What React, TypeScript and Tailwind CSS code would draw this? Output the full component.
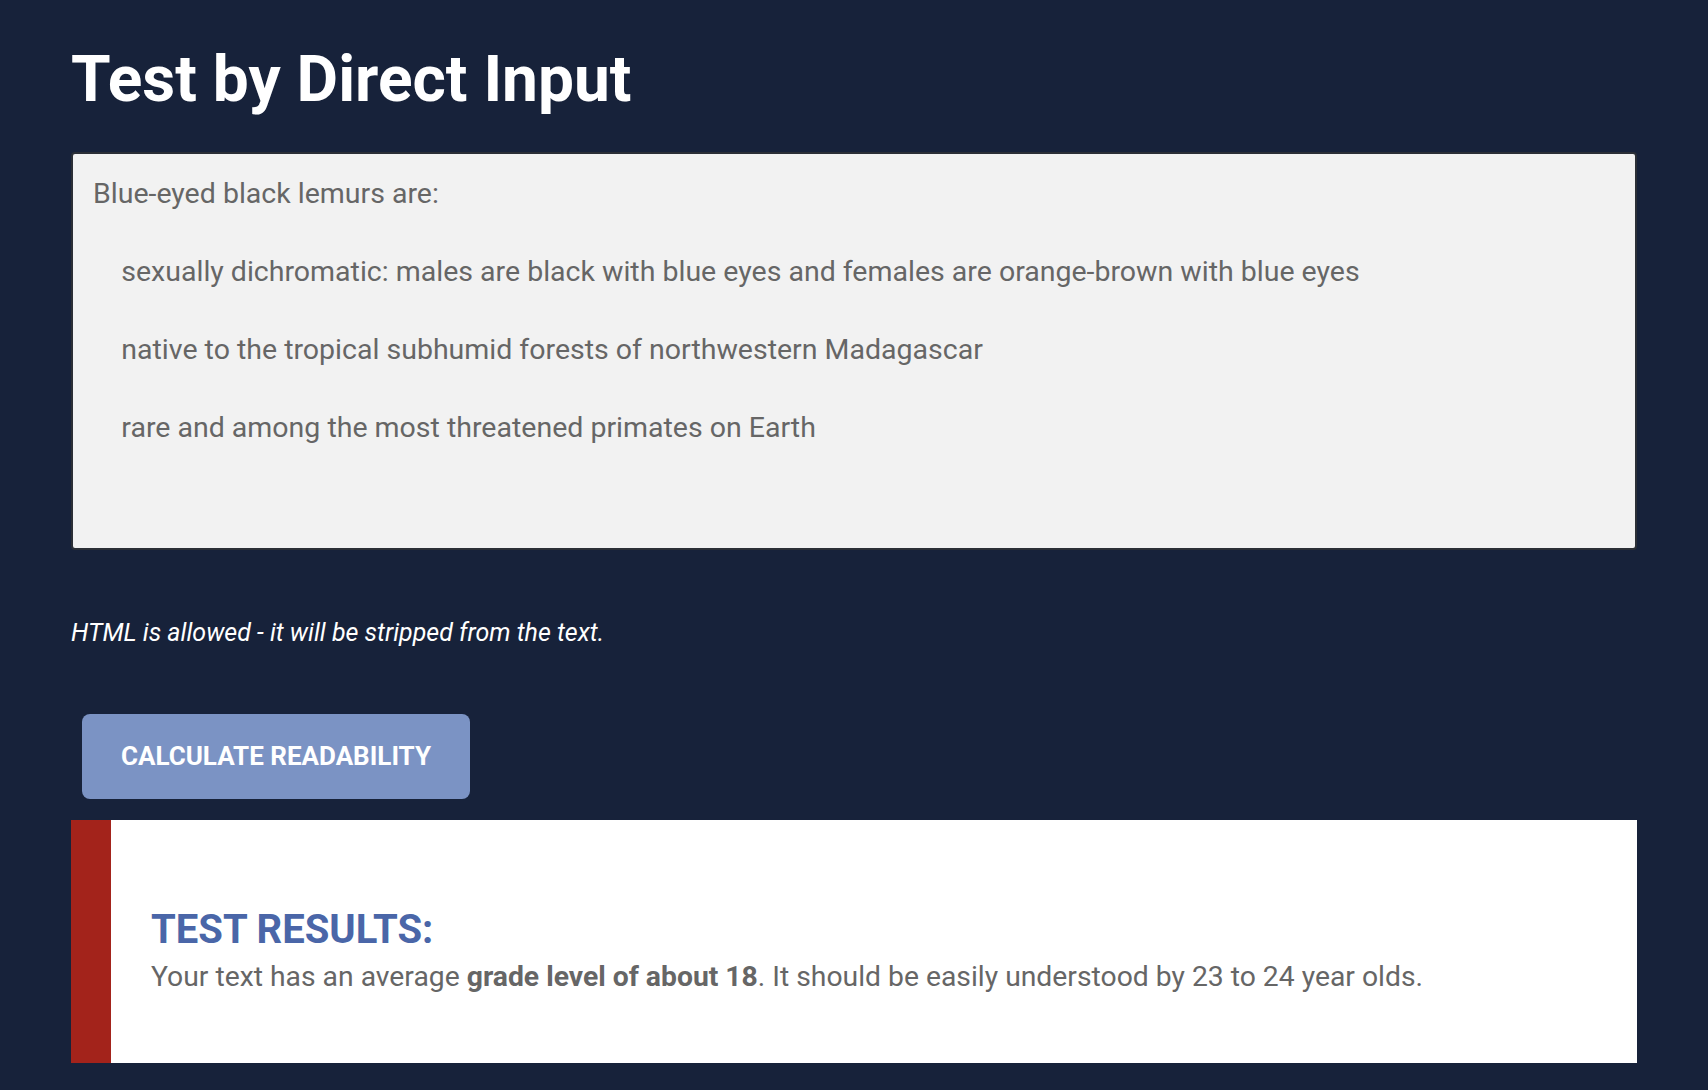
import React from 'react';

const sample = `Blue-eyed black lemurs are:

    sexually dichromatic: males are black with blue eyes and females are orange-brown with blue eyes

    native to the tropical subhumid forests of northwestern Madagascar

    rare and among the most threatened primates on Earth`;

const App: React.FC = () => {
  return (
    <div className="min-h-screen bg-[#17223a] font-['Roboto','Liberation_Sans',sans-serif]">
      <div className="px-[71px] pt-[40px] pb-[28px]">
        {/* Header */}
        <h1 className="text-[64px] font-bold leading-[80px] text-white">Test by Direct Input</h1>

        {/* Input */}
        <textarea
          defaultValue={sample}
          className="mt-[32px] block h-[398px] w-full resize-none rounded-[4px] border-2 border-[#2b2f36] bg-[#f2f2f2] px-[20px] pt-[20px] pb-[18px] text-[28.5px] leading-[39px] text-[#666666] outline-none"
        />

        <p className="mt-[64px] text-[25px] italic text-white">
          HTML is allowed - it will be stripped from the text.
        </p>

        <button
          type="button"
          className="mt-[62px] ml-[11px] h-[85px] w-[388px] rounded-[8px] bg-[#7b93c4] text-[26px] font-bold uppercase text-white"
        >
          Calculate Readability
        </button>

        {/* Results */}
        <div className="mt-[21px] flex h-[243px] bg-white">
          <div className="w-[40px] bg-[#a3231b]" />
          <div className="pl-[40px] pt-[87px]">
            <h2 className="text-[40px] font-bold leading-[46px] uppercase text-[#4a66a8]">Test Results:</h2>
            <p className="mt-[5px] text-[28.3px] leading-[38px] text-[#666666]">
              Your text has an average <strong className="font-bold">grade level of about 18</strong>. It should be easily understood by 23 to 24 year olds.
            </p>
          </div>
        </div>
      </div>
    </div>
  );
};

export default App;
